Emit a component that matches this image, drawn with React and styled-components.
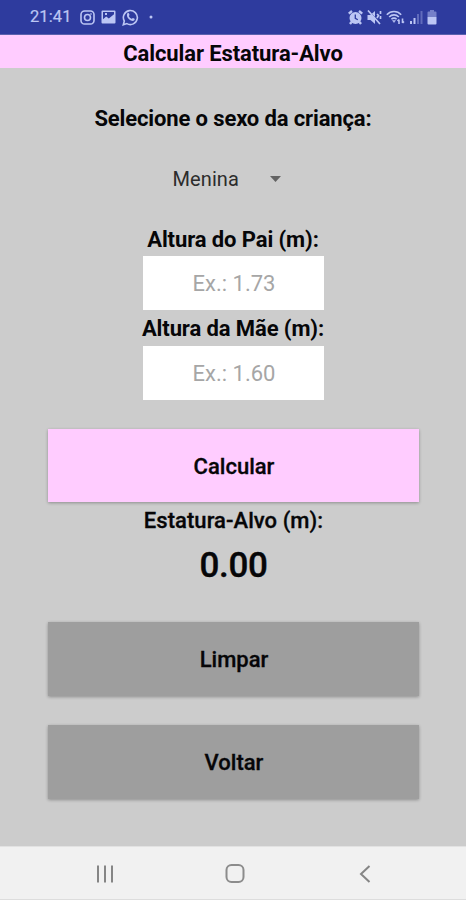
import React, { useState } from 'react';
import styled, { createGlobalStyle } from 'styled-components'

const GlobalStyle = createGlobalStyle`
    * {
        box-sizing: border-box;
    }
    body {
        margin: 0;
        font-family: Roboto, sans-serif;
        color: #060608;
        background-color: #cccccc;
    }
`;

const Screen = styled.div`
    display: flex;
    flex-direction: column;
    height: 900px;
    overflow: hidden;
    background-color: #cccccc;
`;

const StatusBar = styled.header`
    display: flex;
    align-items: center;
    justify-content: space-between;
    height: 35px;
    padding: 0 29px 0 30px;
    color: #bcc6f4;
    background-color: #2e3b9e;
    border-bottom: 1px solid #5b62ae;
`;

const StatusGroup = styled.div`
    display: flex;
    align-items: center;
    gap: ${({ gap }) => gap};
`;

const Clock = styled.span`
    width: 44px;
    font-size: 16.5px;
    line-height: 34px;
    letter-spacing: 0.1px;
    -webkit-text-stroke: 0.2px;
`;

const TitleBar = styled.h1`
    height: 33px;
    margin: 0;
    padding-top: 2px;
    font-size: 22px;
    font-weight: 700;
    line-height: 33px;
    letter-spacing: -0.1px;
    text-align: center;
    background-color: #ffccff;
`;

const Form = styled.main`
    display: flex;
    flex: 1;
    flex-direction: column;
    align-items: center;
    padding-top: 37px;
`;

const Question = styled.h2`
    margin: 0 0 32px;
    font-size: 22px;
    font-weight: 700;
    line-height: 27px;
    letter-spacing: -0.13px;
`;

const Spinner = styled.button`
    display: flex;
    align-items: center;
    justify-content: space-between;
    width: 121px;
    height: 30px;
    margin: 0 0 30px;
    padding: 0 13px 0 0;
    border: 0;
    font-family: inherit;
    font-size: 20px;
    letter-spacing: 0.1px;
    color: #2c2c2c;
    background: none;
`;

const Label = styled.label`
    padding-top: ${({ offset }) => offset || 0}px;
    font-size: 22px;
    font-weight: 700;
    line-height: ${({ height }) => height}px;
    letter-spacing: -0.1px;
    white-space: nowrap;
`;

const HeightInput = styled.input`
    width: 181px;
    height: 54px;
    padding: 1px 0 0 2px;
    border: 0;
    border-radius: 0;
    font-family: inherit;
    font-size: 22px;
    text-align: center;
    color: #222222;
    background-color: #ffffff;
    outline: 0;
    &::placeholder{
        color: #a6a6a6;
        opacity: 1;
    }
`;

const Button = styled.button`
    flex-shrink: 0;
    width: 371px;
    height: ${({ $primary }) => $primary ? '73px' : '74px'};
    margin: 29px 0 0;
    padding: ${({ $primary }) => $primary ? '1px' : '0'} 0 0 2px;
    border: 0;
    font-family: inherit;
    font-size: 22px;
    font-weight: 500;
    letter-spacing: 0;
    -webkit-text-stroke: 0.3px;
    color: inherit;
    background-color: ${({ $primary }) => $primary ? '#ffccff' : '#9e9e9e'};
    box-shadow: 0 1px 3px rgba(0, 0, 0, 0.3);
`;

const ResultLabel = styled.p`
    margin: 0;
    padding-left: 1px;
    font-size: 22px;
    font-weight: 500;
    line-height: 37px;
    letter-spacing: 0.05px;
    -webkit-text-stroke: 0.3px;
`;

const Result = styled.output`
    padding: 1px 0 1px 1px;
    font-size: 35px;
    font-weight: 500;
    line-height: 52px;
    letter-spacing: -0.3px;
    -webkit-text-stroke: 0.4px;
`;

const NavBar = styled.nav`
    display: flex;
    align-items: center;
    justify-content: space-between;
    height: 54px;
    padding: 2px 91px 0 94px;
    background-color: #f1f1f1;
    border-top: 1px solid #e2e2e2;
    border-bottom: 1px solid #dddddd;
`;

const InstagramIcon = () => (
    <svg width="15" height="15" viewBox="0 0 15 15" fill="none" stroke="currentColor" strokeWidth="1.6">
        <rect x="1" y="1" width="13" height="13" rx="3.6" />
        <circle cx="7.5" cy="7.5" r="3" />
        <circle cx="11" cy="4" r=".5" strokeWidth=".8" />
    </svg>
);

const PictureIcon = () => (
    <svg width="15" height="14" viewBox="0 0 15 14">
        <path fill="currentColor" fillRule="evenodd" d="M1.5.5h12a1 1 0 0 1 1 1v11a1 1 0 0 1-1 1h-12a1 1 0 0 1-1-1v-11a1 1 0 0 1 1-1zM2 2v7.2l3.2-2.7 2.6 2 5.2-4.2V2zM4 3h2v2H4z" />
    </svg>
);

const WhatsappIcon = () => (
    <svg width="17" height="17" viewBox="0 0 17 17">
        <path fill="none" stroke="currentColor" strokeWidth="1.6" d="M1.3 15.7l1-3.7a7 7 0 1 1 2.6 2.6z" />
        <path fill="currentColor" d="M5.4 4.3c.7-.7 1.3-.5 1.6.2l.5 1.3c.1.5-.6.9-.7 1.3.6 1.3 1.5 2.2 2.8 2.7.5 0 .9-1 1.4-.8l1.5.8c.5.3.1 1.2-.4 1.7-1.2 1-3.3.3-5-1.2C5.2 8.7 4.2 6 5.4 4.3z" />
    </svg>
);

const AlarmIcon = () => (
    <svg width="15" height="15" viewBox="0 0 15 15">
        <circle cx="7.5" cy="8" r="6" fill="currentColor" />
        <path stroke="currentColor" strokeWidth="2.4" d="M.8 3.7L4 1M14.2 3.7L11 1M3.5 12l-1.5 2M11.5 12l1.5 2" />
        <path fill="none" stroke="#2e3b9e" strokeWidth="1.3" d="M7.3 4.5v3.8l2.5 1.4" />
    </svg>
);

const MuteIcon = () => (
    <svg width="15" height="15" viewBox="0 0 15 15">
        <path fill="currentColor" d="M.5 5h3L8 1v13l-4.5-4h-3z" />
        <path stroke="#2e3b9e" d="M2 .8l11 12" />
        <path fill="none" stroke="currentColor" strokeWidth="1.7" d="M1 .5L13 14M10 4l1.5 1.5L10 8M13.5 1v3M13.5 6v3" />
    </svg>
);

const WifiIcon = () => (
    <svg width="19" height="15" viewBox="0 0 19 15" fill="none" stroke="currentColor">
        <path strokeWidth="1.6" d="M.8 4.7c4-4.3 10.4-4.3 14.4 0M3.2 7c2.700-2.800 6.900-2.800 9.600 0M5.400 9.200c1.500-1.500 3.700-1.500 5.200 0" />
        <path fill="currentColor" strokeWidth=".5" d="M8 12.5l-1.5-2h3z" />
        <path strokeWidth="1.6" d="M13 14V9.5M11.5 11L13 9.5M16.5 8.5V13M18 11.5L16.5 13" />
    </svg>
);

const SignalIcon = () => (
    <svg width="13" height="14" viewBox="0 0 13 14" fill="currentColor">
        <rect x="0" y="11" width="2" height="3" />
        <rect x="3.5" y="8" width="2" height="6" />
        <rect x="7" y="4" width="2" height="10" opacity=".35" />
        <rect x="10.5" y="1" width="2" height="13" opacity=".35" />
    </svg>
);

const BatteryIcon = () => (
    <svg width="10" height="15" viewBox="0 0 10 15" fill="currentColor">
        <path opacity=".5" d="M3 0h4v1.5h1.5a1 1 0 0 1 1 1V7h-9V2.500a1 1 0 0 1 1-1H3z" />
        <path d="M.5 7h9v6.5a1 1 0 0 1-1 1h-7a1 1 0 0 1-1-1z" />
    </svg>
);

const DotIcon = () => (
    <svg width="4" height="4" viewBox="0 0 4 4">
        <circle cx="2" cy="2" r="1.5" fill="currentColor" />
    </svg>
);

const ArrowDownIcon = () => (
    <svg width="11" height="6" viewBox="0 0 11 6">
        <path fill="#636363" d="M0 0h11L5.5 6z" />
    </svg>
);

const RecentsIcon = () => (
    <svg width="22" height="20" viewBox="0 0 22 20" stroke="#858585" strokeWidth="2">
        <path d="M4 1.5v17M11 1.5v17M18 1.5v17" />
    </svg>
);

const HomeIcon = () => (
    <svg width="22" height="22" viewBox="0 0 22 22" fill="none" stroke="#8c8c8c" strokeWidth="2">
        <rect x="1.5" y="2" width="17" height="17" rx="5" />
    </svg>
);

const BackIcon = () => (
    <svg width="20" height="20" viewBox="0 0 20 20" fill="none" stroke="#858585" strokeWidth="2">
        <path d="M14.5 2L6 10l8.5 8" />
    </svg>
);

const App = () => {
    const [father, setFather] = useState('');
    const [mother, setMother] = useState('');
    const [girl, setGirl] = useState(true);
    const [result, setResult] = useState(0);

    const calculate = () => {
        const sum = parseFloat(father) + parseFloat(mother);
        setResult(sum ? (sum + (girl ? -0.13 : 0.13)) / 2 : 0);
    };

    const clear = () => {
        setFather('');
        setMother('');
        setResult(0);
    };

    return (
        <Screen>
            <GlobalStyle />
            <StatusBar>
                <StatusGroup gap="6px">
                    <Clock>21:41</Clock>
                    <InstagramIcon />
                    <PictureIcon />
                    <WhatsappIcon />
                    <StatusGroup gap="0">
                        &nbsp;
                        <DotIcon />
                    </StatusGroup>
                </StatusGroup>
                <StatusGroup gap="4.3px">
                    <AlarmIcon />
                    <MuteIcon />
                    <WifiIcon />
                    <SignalIcon />
                    <BatteryIcon />
                </StatusGroup>
            </StatusBar>
            <TitleBar>Calcular Estatura-Alvo</TitleBar>
            <Form>
                <Question>Selecione o sexo da criança:</Question>
                <Spinner onClick={() => setGirl(!girl)}>
                    {girl ? 'Menina' : 'Menino'}
                    <ArrowDownIcon />
                </Spinner>
                <Label htmlFor="father" height={32}>Altura do Pai (m):</Label>
                <HeightInput id="father" placeholder="Ex.: 1.73" value={father} onChange={e => setFather(e.target.value)} />
                <Label htmlFor="mother" height={34} offset={2}>Altura da Mãe (m):</Label>
                <HeightInput id="mother" placeholder="Ex.: 1.60" value={mother} onChange={e => setMother(e.target.value)} />
                <Button $primary onClick={calculate}>Calcular</Button>
                <ResultLabel>Estatura-Alvo (m):</ResultLabel>
                <Result>{result.toFixed(2)}</Result>
                <Button onClick={clear}>Limpar</Button>
                <Button>Voltar</Button>
            </Form>
            <NavBar>
                <RecentsIcon />
                <HomeIcon />
                <BackIcon />
            </NavBar>
        </Screen>
    );
}

export default App;
